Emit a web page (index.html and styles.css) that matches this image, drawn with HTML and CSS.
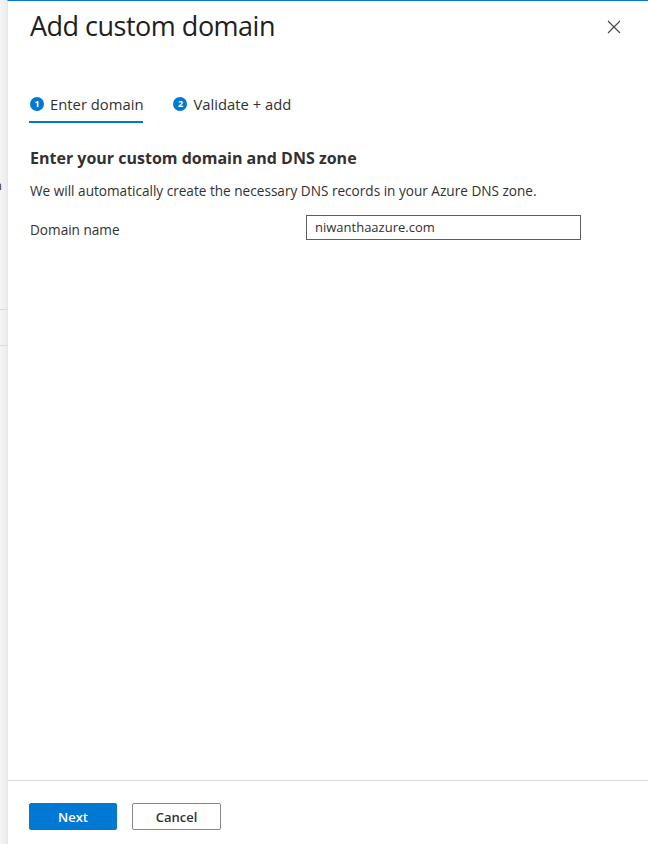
FILE: index.html
```html
<!DOCTYPE html>
<html lang="en">
  <head>
    <title>Add custom domain</title>
    <meta charset="utf-8">
    <link rel="stylesheet" href="styles.css">
  </head>
  <body>

  <div class="behind">
    <span class="behind-text">n</span>
    <div class="behind-row"></div>
    <div class="behind-row"></div>
  </div>

  <div class="blade">
    <div class="blade-header">
      <h1 class="blade-title">Add custom domain</h1>
      <button class="close" aria-label="Close">
        <svg width="14" height="14" viewBox="0 0 14 14">
          <path d="M1 1 L13 13 M13 1 L1 13" stroke="#484644" stroke-width="1.1" fill="none"/>
        </svg>
      </button>
    </div>

    <div class="tabs">
      <div class="tab active"><span class="step">1</span>Enter domain</div>
      <div class="tab"><span class="step">2</span>Validate + add</div>
    </div>

    <div class="content">
      <h2 class="section-title">Enter your custom domain and DNS zone</h2>
      <p class="desc">We will automatically create the necessary DNS records in your Azure DNS zone.</p>
      <div class="field">
        <label class="field-label" for="domain">Domain name</label>
        <input class="field-input" id="domain" type="text" value="niwanthaazure.com">
      </div>
    </div>

    <div class="footer">
      <button class="btn primary">Next</button>
      <button class="btn">Cancel</button>
    </div>
  </div>

  </body>
</html>
```

FILE: styles.css
```css
html {
  height: 100%;
}
body {
  margin: 0;
  padding: 0;
  height: 100%;
  display: flex;
  background: #fff;
  color: #323130;
  font-family: "Open Sans", "Noto Sans", sans-serif;
  font-size: 13px;
  overflow: hidden;
}

/* strip of the page behind the blade */
.behind {
  width: 7px;
  flex: none;
  background: linear-gradient(to right, #f5f5f5, #ececec);
  overflow: hidden;
  position: relative;
}
.behind-text {
  position: absolute;
  left: -6px;
  top: 176px;
  font-size: 13px;
  color: #323130;
}
.behind-row {
  height: 35px;
  border-bottom: 1px solid #dadada;
}
.behind-row:first-of-type {
  margin-top: 274px;
}

.blade {
  flex: 1;
  display: flex;
  flex-direction: column;
  border-top: 1px solid #0078d4;
  border-left: 1px solid #e6e6e6;
  box-shadow: -2px 0 4px rgba(0,0,0,0.06);
}

.blade-header {
  display: flex;
  justify-content: space-between;
  align-items: flex-start;
  padding: 7px 27px 0 22px;
}
.blade-title {
  margin: 0;
  font-size: 27px;
  font-weight: 400;
  letter-spacing: -0.5px;
  line-height: 36px;
  color: #201f1e;
}
.close {
  border: 0;
  background: none;
  padding: 0;
  margin-top: 12px;
  width: 14px;
  height: 14px;
  cursor: pointer;
}

.tabs {
  display: flex;
  gap: 29px;
  margin: 46px 0 0 21px;
}
.tab {
  display: flex;
  align-items: center;
  font-size: 14.8px;
  line-height: 20px;
  padding: 4px 0 7px 1px;
  color: #323130;
  border-bottom: 2px solid transparent;
}
.tab.active {
  border-bottom-color: #0078d4;
}
.step {
  width: 14px;
  height: 14px;
  border-radius: 50%;
  background: #0078d4;
  color: #fff;
  font-size: 9px;
  font-weight: 700;
  line-height: 14px;
  text-align: center;
  margin-right: 6px;
}

.content {
  flex: 1;
  padding: 24px 22px 0;
  font-size: 13.6px;
}
.section-title {
  margin: 0;
  font-size: 16px;
  font-weight: 700;
  line-height: 22px;
}
.desc {
  margin: 12px 0 0;
  line-height: 20px;
}
.field {
  display: flex;
  align-items: center;
  margin-top: 13px;
}
.field-label {
  width: 276px;
  line-height: 20px;
  padding-top: 6px;
}
.field-input {
  width: 275px;
  height: 25px;
  box-sizing: border-box;
  border: 1px solid #605e5c;
  border-radius: 0;
  padding: 0 8px;
  font: inherit;
  font-size: 13px;
  color: #323130;
}

.footer {
  border-top: 1px solid #dcdcdc;
  padding: 22px 22px 14px 21px;
  display: flex;
  gap: 15px;
}
.btn {
  width: 89px;
  height: 27px;
  font: inherit;
  font-weight: 600;
  border: 1px solid #8a8886;
  border-radius: 2px;
  background: #fff;
  color: #323130;
}
.btn.primary {
  width: 88px;
  background: #0078d4;
  border-color: #0078d4;
  color: #fff;
}
```
